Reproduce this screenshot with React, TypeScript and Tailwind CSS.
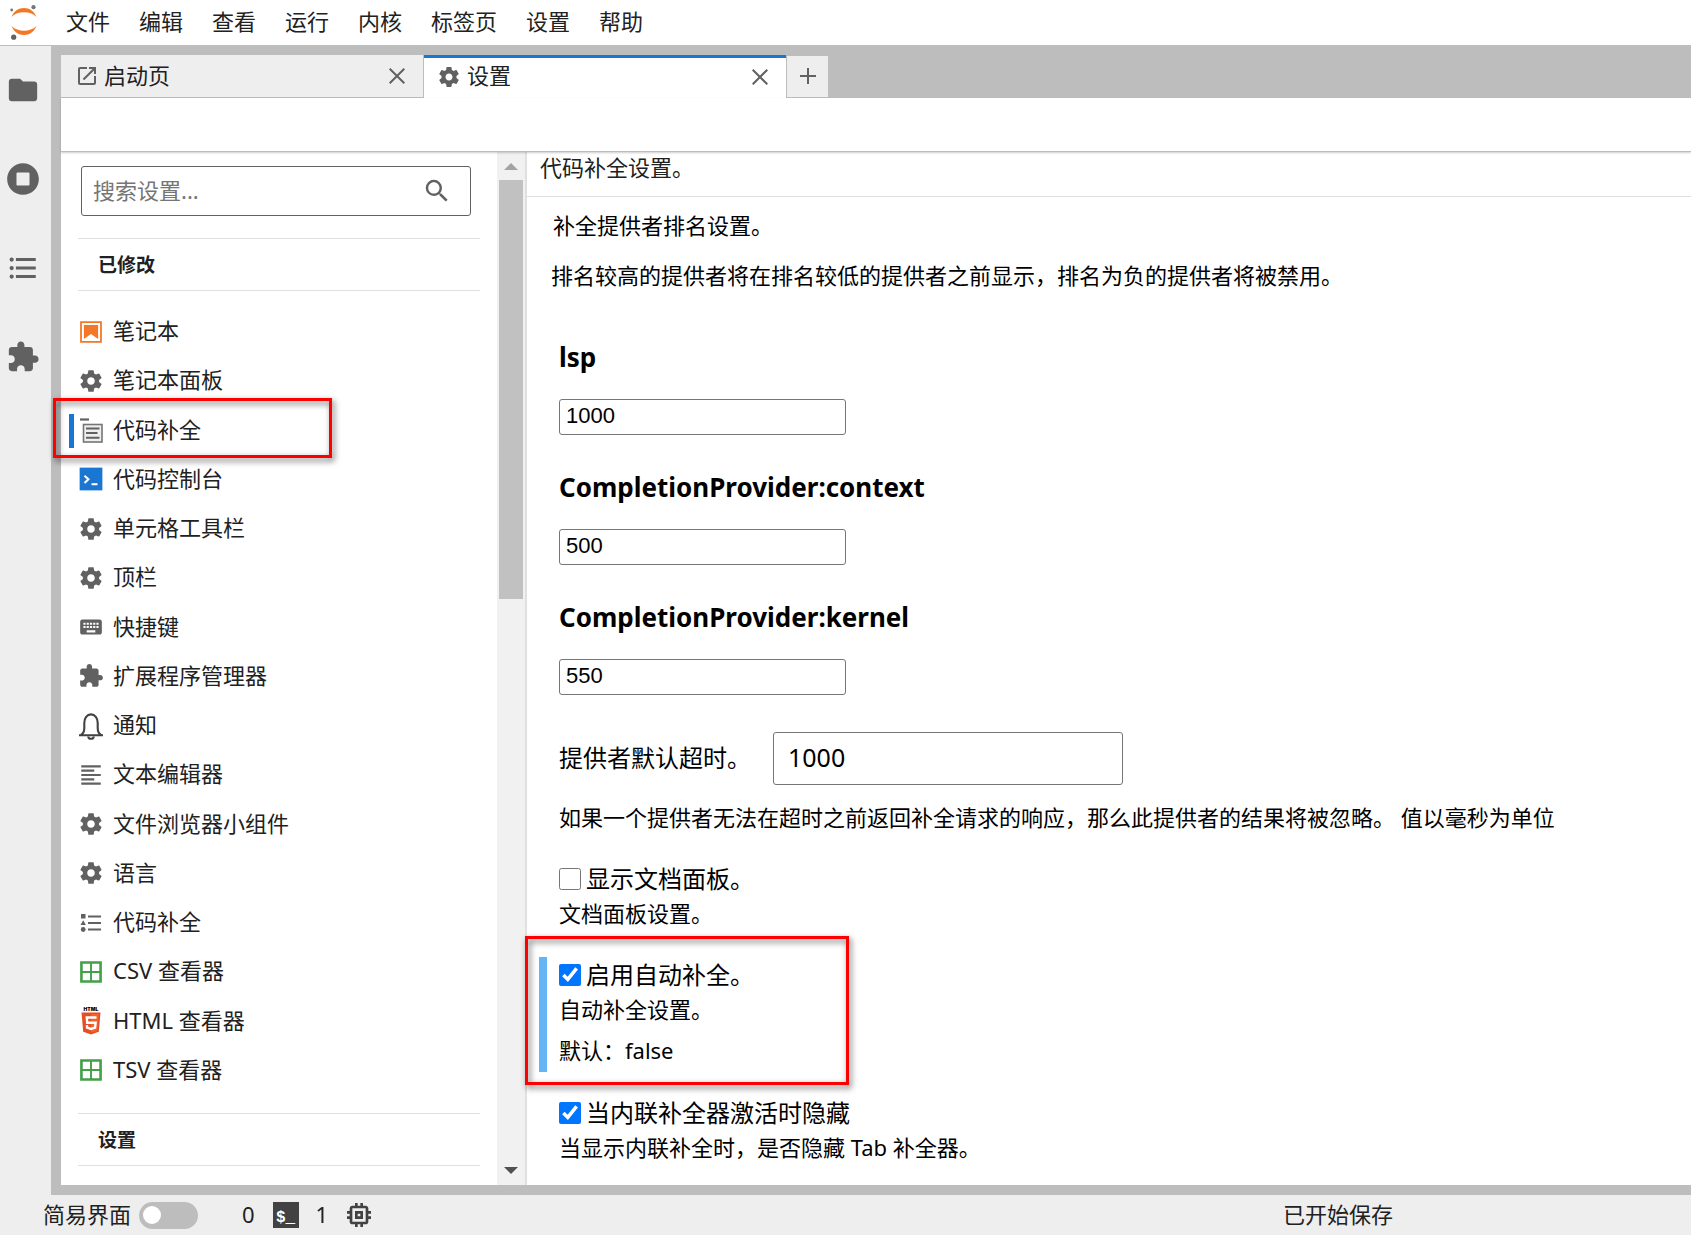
import type { ReactNode } from 'react';

const GEAR =
  'M19.43 12.98c.04-.32.07-.64.07-.98s-.03-.66-.07-.98l2.11-1.65c.19-.15.24-.42.12-.64l-2-3.46c-.12-.22-.39-.3-.61-.22l-2.49 1c-.52-.4-1.08-.73-1.69-.98l-.38-2.65C14.46 2.18 14.25 2 14 2h-4c-.25 0-.46.18-.49.42l-.38 2.65c-.61.25-1.17.59-1.69.98l-2.49-1c-.23-.09-.49 0-.61.22l-2 3.46c-.13.22-.07.49.12.64l2.11 1.65c-.04.32-.07.65-.07.98s.03.66.07.98l-2.11 1.65c-.19.15-.24.42-.12.64l2 3.46c.12.22.39.3.61.22l2.49-1c.52.4 1.08.73 1.69.98l.38 2.65c.03.24.24.42.49.42h4c.25 0 .46-.18.49-.42l.38-2.65c.61-.25 1.17-.59 1.69-.98l2.49 1c.23.09.49 0 .61-.22l2-3.46c.12-.22.07-.49-.12-.64l-2.11-1.65zM12 15.5c-1.93 0-3.5-1.57-3.5-3.5s1.57-3.5 3.5-3.5 3.5 1.57 3.5 3.5-1.57 3.5-3.5 3.5z';
const PUZZLE =
  'M20.5 11H19V7c0-1.1-.9-2-2-2h-4V3.5C13 2.12 11.88 1 10.5 1S8 2.12 8 3.5V5H4c-1.1 0-1.99.9-1.99 2v3.8H3.5c1.49 0 2.7 1.21 2.7 2.7s-1.21 2.7-2.7 2.7H2V20c0 1.1.9 2 2 2h3.8v-1.5c0-1.49 1.21-2.7 2.7-2.7 1.49 0 2.7 1.21 2.7 2.7V22H17c1.1 0 2-.9 2-2v-4h1.5c1.38 0 2.5-1.12 2.5-2.5S21.88 11 20.5 11z';
const FOLDER =
  'M10 4H4c-1.1 0-1.99.9-1.99 2L2 18c0 1.1.9 2 2 2h16c1.1 0 2-.9 2-2V8c0-1.1-.9-2-2-2h-8l-2-2z';
const RUNNING =
  'M12 .8C5.8.8.8 5.8.8 12s5 11.2 11.2 11.2 11.2-5 11.2-11.2S18.2.8 12 .8zm4.6 15c0 .4-.4.8-.8.8H8.2c-.4 0-.8-.4-.8-.8V8.2c0-.4.4-.8.8-.8h7.6c.4 0 .8.4.8.8v7.6z';
const LIST =
  'M7 5h14v2H7V5m0 8v-2h14v2H7M4 4.5A1.5 1.5 0 0 1 5.5 6 1.5 1.5 0 0 1 4 7.5 1.5 1.5 0 0 1 2.5 6 1.5 1.5 0 0 1 4 4.5m0 6A1.5 1.5 0 0 1 5.5 12 1.5 1.5 0 0 1 4 13.5 1.5 1.5 0 0 1 2.5 12 1.5 1.5 0 0 1 4 10.5M7 19v-2h14v2H7m-3-2.5A1.5 1.5 0 0 1 5.5 18 1.5 1.5 0 0 1 4 19.5 1.5 1.5 0 0 1 2.5 18 1.5 1.5 0 0 1 4 16.5z';
const KEYBOARD =
  'M20 5H4c-1.1 0-1.99.9-1.99 2L2 17c0 1.1.9 2 2 2h16c1.1 0 2-.9 2-2V7c0-1.1-.9-2-2-2zm-9 3h2v2h-2V8zm0 3h2v2h-2v-2zM8 8h2v2H8V8zm0 3h2v2H8v-2zm-1 2H5v-2h2v2zm0-3H5V8h2v2zm9 7H8v-2h8v2zm0-4h-2v-2h2v2zm0-3h-2V8h2v2zm3 3h-2v-2h2v2zm0-3h-2V8h2v2z';
const LAUNCHER =
  'M19 19H5V5h7V3H5a2 2 0 0 0-2 2v14a2 2 0 0 0 2 2h14c1.1 0 2-.9 2-2v-7h-2v7zM14 3v2h3.59l-9.83 9.83 1.41 1.41L19 6.41V10h2V3h-7z';
const SEARCH =
  'M15.5 14h-.79l-.28-.27A6.471 6.471 0 0 0 16 9.5 6.5 6.5 0 1 0 9.5 16c1.61 0 3.09-.59 4.23-1.57l.27.28v.79l5 4.99L20.49 19l-4.99-5zm-6 0C7.01 14 5 11.99 5 9.5S7.01 5 9.5 5 14 7.01 14 9.5 11.99 14 9.5 14z';
const TEXT_EDITOR =
  'M15 15H3v2h12v-2zm0-8H3v2h12V7zM3 13h18v-2H3v2zm0 8h18v-2H3v2zM3 3v2h18V3H3z';
const KERNEL =
  'M15 9H9v6h6V9zm-2 4h-2v-2h2v2zm8-2V9h-2V7c0-1.1-.9-2-2-2h-2V3h-2v2h-2V3H9v2H7c-1.1 0-2 .9-2 2v2H3v2h2v2H3v2h2v2c0 1.1.9 2 2 2h2v2h2v-2h2v2h2v-2h2c1.1 0 2-.9 2-2v-2h2v-2h-2v-2h2zm-4 6H7V7h10v10z';

function Glyph({ d, className = 'size-[26px]' }: { d: string; className?: string }) {
  return (
    <svg viewBox="0 0 24 24" className={`${className} shrink-0 fill-[#616161]`} aria-hidden="true">
      <path d={d} />
    </svg>
  );
}

function NotebookIcon() {
  return (
    <svg viewBox="0 0 22 22" className="size-[26px] fill-[#f37726]" aria-hidden="true">
      <path d="M18.7 3.3v15.4H3.3V3.3h15.4m1.5-1.5H1.8v18.4h18.4V1.8z" />
      <path d="M17 17l-6-4.300L5 17V5h12z" />
    </svg>
  );
}

function CompleterIcon() {
  return (
    <svg viewBox="0 0 24 26" className="h-[26px] w-6" fill="none" aria-hidden="true">
      <path d="M1 2.500h9" stroke="#616161" strokeWidth="2.200" />
      <rect x="4.500" y="7.500" width="18.500" height="17.500" fill="#eee" stroke="#757575" strokeWidth="1.600" />
      <path d="M7 11.500h13.500M7 16h11.500M7 20.800h13.500" stroke="#616161" strokeWidth="2" />
    </svg>
  );
}

function ConsoleIcon() {
  return (
    <svg viewBox="0 0 24 24" className="size-[26px]" fill="none" aria-hidden="true">
      <path d="M1.500 1.500h21v21h-21z" fill="#1976d2" />
      <path d="M6 9l3.600 3.200L6 15.600" stroke="#fff" strokeWidth="1.900" />
      <path d="M12.500 16.800H18" stroke="#fff" strokeWidth="1.900" />
    </svg>
  );
}

function BellIcon() {
  return (
    <svg viewBox="0 0 26 28" className="h-7 w-[26px]" fill="none" stroke="#424242" strokeWidth="2.100" aria-hidden="true">
      <path d="M1 23.200h24M3 23c2.500-1.600 3.300-3.600 3.300-7v-5C6.300 6 9 2.400 13 2.400s6.700 3.600 6.700 8.600v5c0 3.400.8 5.400 3.300 7" />
      <path d="M10.300 24.500a2.700 2.300 0 0 0 5.400 0" />
    </svg>
  );
}

function ShapesIcon() {
  return (
    <svg viewBox="0 0 24 24" className="size-6 fill-[#616161]" aria-hidden="true">
      <path d="M2 3h4.500v4.500H2zM4.200 9.300l2.700 4.700H1.500z" />
      <circle cx="4.200" cy="18.500" r="2.400" />
      <path d="M9 4.500h13v2H9zM9 11h13v2H9zM9 17.500h13v2H9z" />
    </svg>
  );
}

function SheetIcon() {
  return (
    <svg viewBox="0 0 22 22" className="size-[26px] fill-[#43a047]" aria-hidden="true">
      <path d="M1.800 1.800v18.400h18.400V1.800zm16.200 8.400h-6.200V4H18zM10.200 4v6.200H4V4zM4 11.800h6.200V18H4zm7.800 6.200v-6.200H18V18z" />
    </svg>
  );
}

function HtmlIcon() {
  return (
    <svg viewBox="0 0 22 28" className="h-7 w-[22px]" aria-hidden="true">
      <text x="11" y="4" textAnchor="middle" className="text-[5px] font-black" fontFamily="Inter, sans-serif">
        HTML
      </text>
      <path d="M1.500 5.500h19l-1.700 19.300L11 27.500l-7.800-2.700z" fill="#e44d26" />
      <path d="M11 7h7.900l-1.500 16.700-6.400 2z" fill="#f16529" />
      <path d="M16.500 10.500H6.800l.4 5.200h8.400l-.5 5L11 22l-3.900-1.300-.2-2.500" fill="none" stroke="#fff" strokeWidth="2.400" />
    </svg>
  );
}

const gear = <Glyph d={GEAR} />;

const PLUGINS: { name: string; icon: ReactNode; selected?: boolean }[] = [
  { name: '笔记本', icon: <NotebookIcon /> },
  { name: '笔记本面板', icon: gear },
  { name: '代码补全', icon: <CompleterIcon />, selected: true },
  { name: '代码控制台', icon: <ConsoleIcon /> },
  { name: '单元格工具栏', icon: gear },
  { name: '顶栏', icon: gear },
  { name: '快捷键', icon: <Glyph d={KEYBOARD} /> },
  { name: '扩展程序管理器', icon: <Glyph d={PUZZLE} /> },
  { name: '通知', icon: <BellIcon /> },
  { name: '文本编辑器', icon: <Glyph d={TEXT_EDITOR} /> },
  { name: '文件浏览器小组件', icon: gear },
  { name: '语言', icon: gear },
  { name: '代码补全', icon: <ShapesIcon /> },
  { name: 'CSV 查看器', icon: <SheetIcon /> },
  { name: 'HTML 查看器', icon: <HtmlIcon /> },
  { name: 'TSV 查看器', icon: <SheetIcon /> },
];

const MENUS = ['文件', '编辑', '查看', '运行', '内核', '标签页', '设置', '帮助'];

const SIDE_TABS = [
  { label: '文件浏览器', d: FOLDER },
  { label: '运行终端和内核', d: RUNNING },
  { label: '目录', d: LIST },
  { label: '扩展程序管理器', d: PUZZLE },
];

const PROVIDERS = [
  { id: 'lsp', value: '1000' },
  { id: 'CompletionProvider:context', value: '500' },
  { id: 'CompletionProvider:kernel', value: '550' },
];

function Highlight({ className }: { className: string }) {
  return (
    <div
      className={`pointer-events-none absolute z-10 border-3 border-[#ff0000] drop-shadow-[2px_3px_3px_rgba(0,0,0,0.6)] ${className}`}
    />
  );
}

function SectionHeading({ children }: { children: ReactNode }) {
  return (
    <h2 className="border-y border-[#e0e0e0] pt-[11px] pb-[9px] pl-5 text-[19px] leading-[31px] font-bold">
      {children}
    </h2>
  );
}

function CheckField({ id, label, help, checked }: { id: string; label: string; help: string; checked?: boolean }) {
  return (
    <>
      <div className="flex items-center gap-[5px]">
        <input id={id} type="checkbox" defaultChecked={checked} className="size-[22px] accent-[#0075ff]" />
        <label htmlFor={id} className="text-2xl leading-[36px]">
          {label}
        </label>
      </div>
      <p className="mt-px leading-[30px]">{help}</p>
    </>
  );
}

function CloseButton({ label }: { label: string }) {
  return (
    <button type="button" aria-label={label} className="ml-auto">
      <svg viewBox="0 0 16 16" className="size-4" stroke="#616161" strokeWidth="2" aria-hidden="true">
        <path d="M.7.7l14.600 14.600M15.300.7L.7 15.300" />
      </svg>
    </button>
  );
}

export default function App() {
  return (
    <div className="flex h-screen flex-col overflow-hidden bg-[#eeeeee] font-['Noto_Sans','Noto_Sans_CJK_SC',sans-serif] text-[22px] text-[#212121]">
      {/* Menu bar */}
      <header className="flex h-[46px] shrink-0 items-center border-b border-[#bdbdbd] bg-white">
        <svg viewBox="0 0 48 44" className="h-11 w-12" aria-hidden="true">
          <path d="M11.500 16C14 10 18.500 7 24 7s10 3 12.500 9C33 12.700 29 11.300 24 11.300S15 12.700 11.500 16z" fill="#f37726" />
          <path d="M11.500 25c2.500 6 7 9 12.500 9s10-3 12.500-9C33 28.300 29 29.700 24 29.700S15 28.300 11.500 25z" fill="#f37726" />
          <circle cx="11.700" cy="9" r="1.400" fill="#757575" />
          <circle cx="33.500" cy="6.200" r="2.100" fill="#757575" />
          <circle cx="13.700" cy="36.200" r="2.600" fill="#616161" />
        </svg>
        <nav className="ml-[18px] flex gap-[29px] pb-[3px]">
          {MENUS.map((menu) => (
            <button key={menu} type="button">
              {menu}
            </button>
          ))}
        </nav>
      </header>

      <div className="flex min-h-0 flex-1">
        {/* Activity bar */}
        <aside className="flex w-[51px] shrink-0 flex-col items-center gap-[55px] pt-[27px] pr-[5px]">
          {SIDE_TABS.map((tab) => (
            <button key={tab.label} type="button" aria-label={tab.label}>
              <Glyph d={tab.d} className="size-[34px]" />
            </button>
          ))}
        </aside>

        <div className="flex min-w-0 flex-1 flex-col bg-[#bdbdbd] pt-[9px] pb-[10px] pl-[10px]">
          {/* Document tabs */}
          <div className="flex h-[43px] shrink-0">
            <div className="flex w-[363px] items-center border-r border-b border-[#bdbdbd] bg-[#eeeeee] pr-[18px] pl-[14px]">
              <Glyph d={LAUNCHER} className="size-6" />
              <span className="ml-[5px] pb-[2px]">启动页</span>
              <CloseButton label="关闭启动页" />
            </div>
            <div className="flex w-[362px] items-center border-t-3 border-[#1976d2] bg-white pr-[18px] pb-[3px] pl-[13px]">
              <Glyph d={GEAR} className="size-6" />
              <span className="ml-[6px] pb-[2px]">设置</span>
              <CloseButton label="关闭设置" />
            </div>
            <button
              type="button"
              aria-label="新建启动页"
              className="flex w-[42px] items-center justify-center border-t border-b border-l border-[#bdbdbd] bg-[#eeeeee] pb-[2px]"
            >
              <svg viewBox="0 0 16 16" className="size-4" stroke="#616161" strokeWidth="2" aria-hidden="true">
                <path d="M8 0v16M0 8h16" />
              </svg>
            </button>
          </div>

          <div className="z-[1] h-[54px] shrink-0 border-b border-[#bdbdbd] bg-white shadow-[0_1px_2px_rgba(0,0,0,0.2)]" />

          <div className="flex min-h-0 flex-1 bg-white">
            {/* Plugin list */}
            <div className="w-[436px] shrink-0 px-[17px]">
              <div className="mt-[14px] mr-[9px] ml-[3px] flex h-[50px] items-center rounded-[3px] border border-[#616161] pr-[18px] pl-[11px]">
                <input
                  type="text"
                  aria-label="搜索设置"
                  placeholder="搜索设置..."
                  className="min-w-0 flex-1 pb-[2px] placeholder-[#757575] outline-none"
                />
                <Glyph d={SEARCH} className="size-[30px]" />
              </div>
              <div className="mt-[22px]">
                <SectionHeading>已修改</SectionHeading>
              </div>
              <ul className="mt-4 mb-[18px] grid min-h-[788px] auto-rows-fr">
                {PLUGINS.map((plugin, i) => (
                  <li key={i} className="relative flex">
                    <button type="button" className="flex flex-1 items-center gap-[9px] text-left">
                      <span className="flex w-[26px] justify-center">{plugin.icon}</span>
                      <span className="pb-[2px]">{plugin.name}</span>
                    </button>
                    {plugin.selected && (
                      <>
                        <div className="absolute top-[8px] -left-[9px] h-[34px] w-[5px] bg-[#1976d2]" />
                        <Highlight className="-top-[8px] -left-[25px] h-[60px] w-[279px]" />
                      </>
                    )}
                  </li>
                ))}
              </ul>
              <SectionHeading>设置</SectionHeading>
            </div>

            {/* Scroll bar */}
            <div className="flex w-[30px] shrink-0 flex-col items-center border-r-2 border-[#e0e0e0] bg-[#f1f1f1]">
              <div className="mt-[11px] border-x-7 border-b-7 border-x-transparent border-b-[#a3a3a3]" />
              <div className="mt-[10px] h-[419px] w-6 bg-[#c1c1c1]" />
              <div className="mt-auto mb-[11px] border-x-7 border-t-7 border-x-transparent border-t-[#505050]" />
            </div>

            {/* Editor for the selected plugin */}
            <main className="min-w-0 flex-1 text-black">
              <p className="border-b border-[#e0e0e0] pb-[14px] pl-[13px] leading-[30px] text-[#212121]">
                代码补全设置。
              </p>
              <form className="px-8">
                <p className="-ml-[6px] pt-[13px] leading-[30px]">补全提供者排名设置。</p>
                <p className="-ml-2 pt-5 pb-[15px] leading-[30px]">
                  排名较高的提供者将在排名较低的提供者之前显示，排名为负的提供者将被禁用。
                </p>
                {PROVIDERS.map((provider) => (
                  <div key={provider.id} className="pt-[34px]">
                    <h3 className="text-[26px] leading-[36px] font-bold">
                      <label htmlFor={provider.id}>{provider.id}</label>
                    </h3>
                    <input
                      id={provider.id}
                      type="text"
                      defaultValue={provider.value}
                      className="mt-6 block h-[36px] w-[287px] rounded-[3px] border border-[#767676] px-[6px] pb-[3px] font-['Liberation_Sans',sans-serif]"
                    />
                  </div>
                ))}
                <div className="mt-[37px] flex items-center gap-[22px]">
                  <label htmlFor="timeout" className="pb-[2px] text-2xl">
                    提供者默认超时。
                  </label>
                  <input
                    id="timeout"
                    type="text"
                    defaultValue="1000"
                    className="h-[53px] w-[350px] rounded-[3px] border border-[#767676] px-[14px] pb-1 text-[25px]"
                  />
                </div>
                <p className="mt-[17px] leading-[30px]">
                  如果一个提供者无法在超时之前返回补全请求的响应，那么此提供者的结果将被忽略。 值以毫秒为单位
                </p>
                <div className="mt-[29px]">
                  <CheckField id="doc-panel" label="显示文档面板。" help="文档面板设置。" />
                </div>
                <div className="relative mt-[29px] -ml-5 border-l-8 border-[#64b5f6] pb-[7px] pl-3">
                  <CheckField id="auto-completion" label="启用自动补全。" help="自动补全设置。" checked />
                  <p className="mt-[11px] leading-[30px]">默认：false</p>
                  <Highlight className="-top-[21px] -left-[22px] h-[149px] w-[324px]" />
                </div>
                <div className="mt-[23px]">
                  <CheckField
                    id="inline-suppress"
                    label="当内联补全器激活时隐藏"
                    help="当显示内联补全时，是否隐藏 Tab 补全器。"
                    checked
                  />
                </div>
              </form>
            </main>
          </div>
        </div>
      </div>

      {/* Status bar */}
      <footer className="flex h-[40px] shrink-0 items-center pl-[43px]">
        <span className="pb-[2px]">简易界面</span>
        <button
          type="button"
          role="switch"
          aria-checked="false"
          aria-label="简易界面"
          className="ml-2 flex h-[27px] w-[59px] items-center rounded-full bg-[#bdbdbd] pl-1"
        >
          <span className="size-[18px] rounded-full bg-white" />
        </button>
        <button type="button" className="ml-[44px] flex items-center">
          <span className="pb-[2px]">0</span>
          <span className="mr-[17px] ml-[18px] flex h-[26px] w-[26px] items-end justify-center bg-[#424242] font-['Liberation_Mono',monospace] text-base leading-5 font-bold text-white">
            $_
          </span>
          <span className="pb-[2px]">1</span>
          <svg viewBox="0 0 24 24" className="ml-[15px] size-[32px] fill-[#424242]" aria-hidden="true">
            <path d={KERNEL} />
          </svg>
        </button>
        <span className="mr-[298px] ml-auto pb-[2px]">已开始保存</span>
      </footer>
    </div>
  );
}
